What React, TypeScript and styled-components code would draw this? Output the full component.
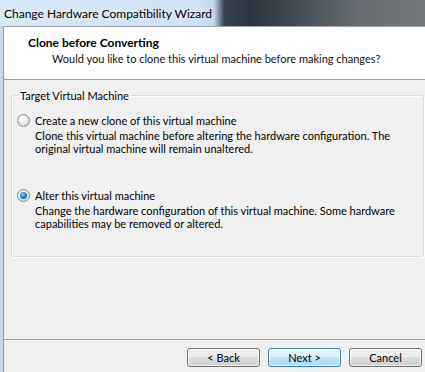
import React from 'react';
import styled, { createGlobalStyle } from 'styled-components';

const GlobalStyle = createGlobalStyle`
  html, body {
    margin: 0;
    padding: 0;
  }
  body {
    width: 425px;
    height: 372px;
    overflow: hidden;
    background: #f0f0f0;
    font-family: Lato, "Liberation Sans", sans-serif;
    font-size: 11px;
    color: #000;
  }
`;

const Window = styled.div`
  width: 425px;
  height: 372px;
  display: flex;
  flex-direction: column;
  overflow: hidden;
`;

const TitleBar = styled.div`
  height: 26px;
  flex-shrink: 0;
  display: flex;
  align-items: center;
  padding-left: 4px;
  box-sizing: border-box;
  font-size: 12px;
  color: #000;
  background: linear-gradient(
    90deg,
    #d9e8f7 0,
    #cfe1f4 200px,
    #c3d6ec 214px,
    #3a4550 224px,
    #2c3640 250px,
    #464f57 300px,
    #676d72 360px,
    #73787b 100%
  );
  text-shadow: 0 0 6px #fff;
`;

const Frame = styled.div`
  flex: 1;
  min-height: 0;
  display: flex;
  padding-left: 3px;
  background: #c4d8ee;
`;

const Client = styled.div`
  flex: 1;
  display: flex;
  flex-direction: column;
  background: #f0f0f0;
  border-left: 1px solid #8f9aa6;
  border-top: 1px solid #9aa3ac;
`;

const Header = styled.div`
  height: 44px;
  flex-shrink: 0;
  background: #fff;
  border-bottom: 1px solid #a0a0a0;
  padding: 8px 0 0 24px;
  box-sizing: content-box;
`;

const HeaderTitle = styled.div`
  font-weight: bold;
  font-size: 12px;
  line-height: 15px;
`;

const HeaderSubtitle = styled.div`
  margin: 1px 0 0 24px;
  line-height: 15px;
  color: #111;
`;

const Main = styled.div`
  flex: 1;
  padding: 8px 1px 0 7px;
`;

const GroupBox = styled.fieldset`
  margin: 0;
  padding: 0 0 26px 5px;
  border: 1px solid #d5dfe5;
  border-radius: 3px;
  box-shadow: inset 1px 1px 0 #fff, 1px 1px 0 #fff;
`;

const GroupLabel = styled.legend`
  padding: 0 2px;
  margin-left: 1px;
  line-height: 15px;
`;

const Option = styled.div<{ $gap: number }>`
  margin-top: ${p => p.$gap}px;
`;

const OptionRow = styled.label`
  display: flex;
  align-items: center;
  gap: 5px;
  height: 15px;
`;

const Radio = styled.input.attrs({ type: 'radio' })`
  appearance: none;
  margin: 0;
  width: 13px;
  height: 13px;
  border-radius: 50%;
  border: 1px solid #8e8f8f;
  box-sizing: border-box;
  background: radial-gradient(circle at 45% 40%, #ffffff 0, #f2f2f2 35%, #d2d2d2 80%);
  display: grid;
  place-items: center;

  &:checked::after {
    content: '';
    width: 7px;
    height: 7px;
    border-radius: 50%;
    background: radial-gradient(circle at 40% 35%, #8fd3fb 0, #1d86d0 45%, #1b4f80 100%);
  }
`;

const Description = styled.div`
  margin-top: 1px;
  padding-left: 18px;
  line-height: 13px;
`;

const Footer = styled.div`
  height: 33px;
  flex-shrink: 0;
  box-sizing: border-box;
  border-top: 1px solid #a0a0a0;
  box-shadow: inset 0 1px 0 #fff;
  padding: 8px 3px 0 0;
  display: flex;
  justify-content: flex-end;
  align-items: flex-start;
  gap: 8px;
`;

const Button = styled.button<{ $default?: boolean }>`
  width: 73px;
  height: 19px;
  padding: 0;
  font-family: inherit;
  font-size: 11px;
  color: #000;
  border-radius: 3px;
  border: 1px solid ${p => (p.$default ? '#3c7fb1' : '#707070')};
  background: ${p =>
    p.$default
      ? 'linear-gradient(#eaf6fd 0%, #d9f0fc 50%, #bee6fd 50%, #a7d9f5 100%)'
      : 'linear-gradient(#f2f2f2 0%, #ebebeb 50%, #dddddd 50%, #cfcfcf 100%)'};
  box-shadow: inset 0 0 0 1px rgba(255, 255, 255, 0.75);
  line-height: 15px;
`;

const App: React.FC = () => {
  return (
    <Window>
      <GlobalStyle />
      <TitleBar>Change Hardware Compatibility Wizard</TitleBar>
      <Frame>
        <Client>
          <Header>
            <HeaderTitle>Clone before Converting</HeaderTitle>
            <HeaderSubtitle>
              Would you like to clone this virtual machine before making changes?
            </HeaderSubtitle>
          </Header>
          <Main>
            <GroupBox>
              <GroupLabel>Target Virtual Machine</GroupLabel>
              <Option $gap={10}>
                <OptionRow>
                  <Radio name="target" />
                  Create a new clone of this virtual machine
                </OptionRow>
                <Description>
                  Clone this virtual machine before altering the hardware configuration. The
                  <br />
                  original virtual machine will remain unaltered.
                </Description>
              </Option>
              <Option $gap={33}>
                <OptionRow>
                  <Radio name="target" defaultChecked />
                  Alter this virtual machine
                </OptionRow>
                <Description>
                  Change the hardware configuration of this virtual machine. Some hardware
                  <br />
                  capabilities may be removed or altered.
                </Description>
              </Option>
            </GroupBox>
          </Main>
          <Footer>
            <Button>&lt; Back</Button>
            <Button $default>Next &gt;</Button>
            <Button>Cancel</Button>
          </Footer>
        </Client>
      </Frame>
    </Window>
  );
};

export default App;
